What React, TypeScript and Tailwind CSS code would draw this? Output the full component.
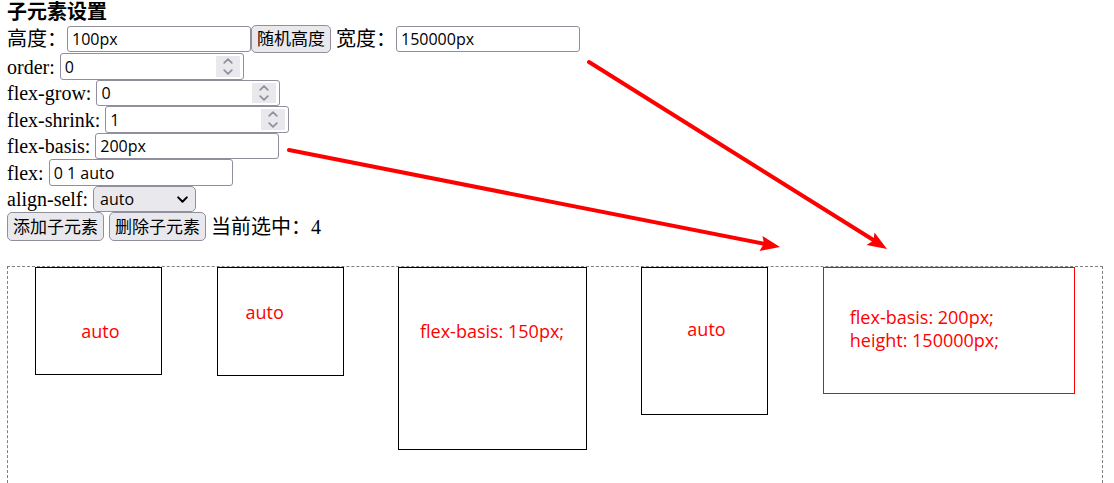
import { useState, type ReactNode } from "react";

const controlFont = "font-['Open_Sans','Noto_Sans_CJK_SC',sans-serif]";
const fieldClass = `w-[184px] rounded-[3px] border border-[#8f8f9d] bg-white px-1 text-base leading-5 text-black ${controlFont}`;
const buttonClass = `rounded-[5px] border border-[#8f8f9d] bg-[#e9e9ed] px-[5px] text-[17px] leading-6 text-black ${controlFont}`;

function Row({ id, label, children }: { id: string; label: string; children: ReactNode }) {
  return (
    <div className="flex items-stretch gap-[5px] odd:h-[27px] even:h-[26px]">
      <label htmlFor={id} className="self-center leading-6">
        {label}
      </label>
      {children}
    </div>
  );
}

function Chevron({ up = false }: { up?: boolean }) {
  return (
    <svg width="10" height="6" viewBox="0 0 10 6" fill="none" stroke="#8f8f9d" strokeWidth="1.7" strokeLinecap="round" strokeLinejoin="round">
      <path d={up ? "M1.2 4.8 5 1.2 8.8 4.8" : "M1.2 1.2 5 4.8 8.8 1.2"} />
    </svg>
  );
}

function NumberField({ id, initial }: { id: string; initial: number }) {
  const [value, setValue] = useState(initial);
  return (
    <div className="flex w-[184px] items-stretch rounded-[3px] border border-[#8f8f9d] bg-white py-[2px] pr-[3px]">
      <input
        id={id}
        type="number"
        value={value}
        onChange={(e) => setValue(Number(e.target.value))}
        className="min-w-0 flex-1 px-1 font-['Open_Sans',sans-serif] text-base leading-5 outline-none [appearance:textfield]"
      />
      <div className="flex w-6 flex-col bg-[#e9e9ed]">
        <button type="button" aria-label="+" onClick={() => setValue(value + 1)} className="flex flex-1 items-center justify-center">
          <Chevron up />
        </button>
        <button type="button" aria-label="-" onClick={() => setValue(value - 1)} className="flex flex-1 items-center justify-center">
          <Chevron />
        </button>
      </div>
    </div>
  );
}

const boxes = [
  { size: "w-[127px] h-[108px] border-black", text: "pt-[52px] pl-[45px]", lines: ["auto"] },
  { size: "w-[127px] h-[109px] border-black", text: "pt-[33px] pl-7", lines: ["auto"] },
  { size: "w-[189px] h-[183px] border-black", text: "pt-[52px] pl-[21px]", lines: ["flex-basis: 150px;"] },
  { size: "w-[127px] h-[148px] border-black", text: "pt-[50px] pl-[45px]", lines: ["auto"] },
  { size: "w-[252px] h-[127px] border-[#ff0000]", text: "pt-[38px] pl-[26px]", lines: ["flex-basis: 200px;", "height: 150000px;"] },
];

export default function App() {
  return (
    <main className="relative flex min-h-screen flex-col bg-white pr-[11px] pl-[7px] font-['Liberation_Serif','Noto_Sans_CJK_SC',serif] text-xl text-black">
      <h1 className="h-[25px] text-xl leading-[25px] font-bold">子元素设置</h1>
      <div className="flex h-7 items-center">
        <label htmlFor="height" className="leading-6">高度：</label>
        <input id="height" defaultValue="100px" className={`h-[26px] ${fieldClass}`} />
        <button type="button" className={`h-7 ${buttonClass}`}>随机高度</button>
        <label htmlFor="width" className="ml-[5px] leading-6">宽度：</label>
        <input id="width" defaultValue="150000px" className={`h-[26px] ${fieldClass}`} />
      </div>
      <div>
        <Row id="order" label="order:">
          <NumberField id="order" initial={0} />
        </Row>
        <Row id="grow" label="flex-grow:">
          <NumberField id="grow" initial={0} />
        </Row>
        <Row id="shrink" label="flex-shrink:">
          <NumberField id="shrink" initial={1} />
        </Row>
        <Row id="basis" label="flex-basis:">
          <input id="basis" defaultValue="200px" className={fieldClass} />
        </Row>
        <Row id="flex" label="flex:">
          <input id="flex" defaultValue="0 1 auto" className={fieldClass} />
        </Row>
        <Row id="align" label="align-self:">
          <div className="relative flex">
            <select id="align" className="w-[103px] appearance-none rounded-[5px] border border-[#8f8f9d] bg-[#e9e9ed] px-[6px] font-['Open_Sans',sans-serif] text-base leading-5">
              <option>auto</option>
              <option>flex-start</option>
              <option>flex-end</option>
              <option>center</option>
              <option>baseline</option>
              <option>stretch</option>
            </select>
            <svg className="pointer-events-none absolute top-[10px] right-2" width="11" height="8" viewBox="0 0 11 8" fill="none" stroke="#000" strokeWidth="2" strokeLinecap="round" strokeLinejoin="round">
              <path d="M1.2 1.4 5.5 5.8 9.8 1.4" />
            </svg>
          </div>
        </Row>
      </div>
      <div className="flex h-[29px] items-stretch gap-[5px]">
        <button type="button" className={buttonClass}>添加子元素</button>
        <button type="button" className={buttonClass}>删除子元素</button>
        <span className="self-center leading-6">当前选中：4</span>
      </div>
      <section className="mt-[25px] flex flex-1 items-start justify-around border border-b-0 border-dashed border-[#808080]">
        {boxes.map((box, i) => (
          <div
            key={i}
            className={`border font-['Open_Sans',sans-serif] text-[18px] leading-[23px] whitespace-nowrap text-[#ff0000] ${box.size} ${box.text}`}
          >
            {box.lines.map((line) => (
              <p key={line}>{line}</p>
            ))}
          </div>
        ))}
      </section>
      <svg className="pointer-events-none absolute top-0 left-0" width="900" height="260" viewBox="0 0 900 260" fill="#f00" stroke="#f00">
        <path d="M289 150 765 244M589 62 875 241" fill="none" strokeWidth="4" strokeLinecap="round" />
        <path d="M780 247 762.5 236 764 243.500 759.500 251ZM887 249 874.500 232.500 873.500 240.500 866.500 245Z" stroke="none" />
      </svg>
    </main>
  );
}
